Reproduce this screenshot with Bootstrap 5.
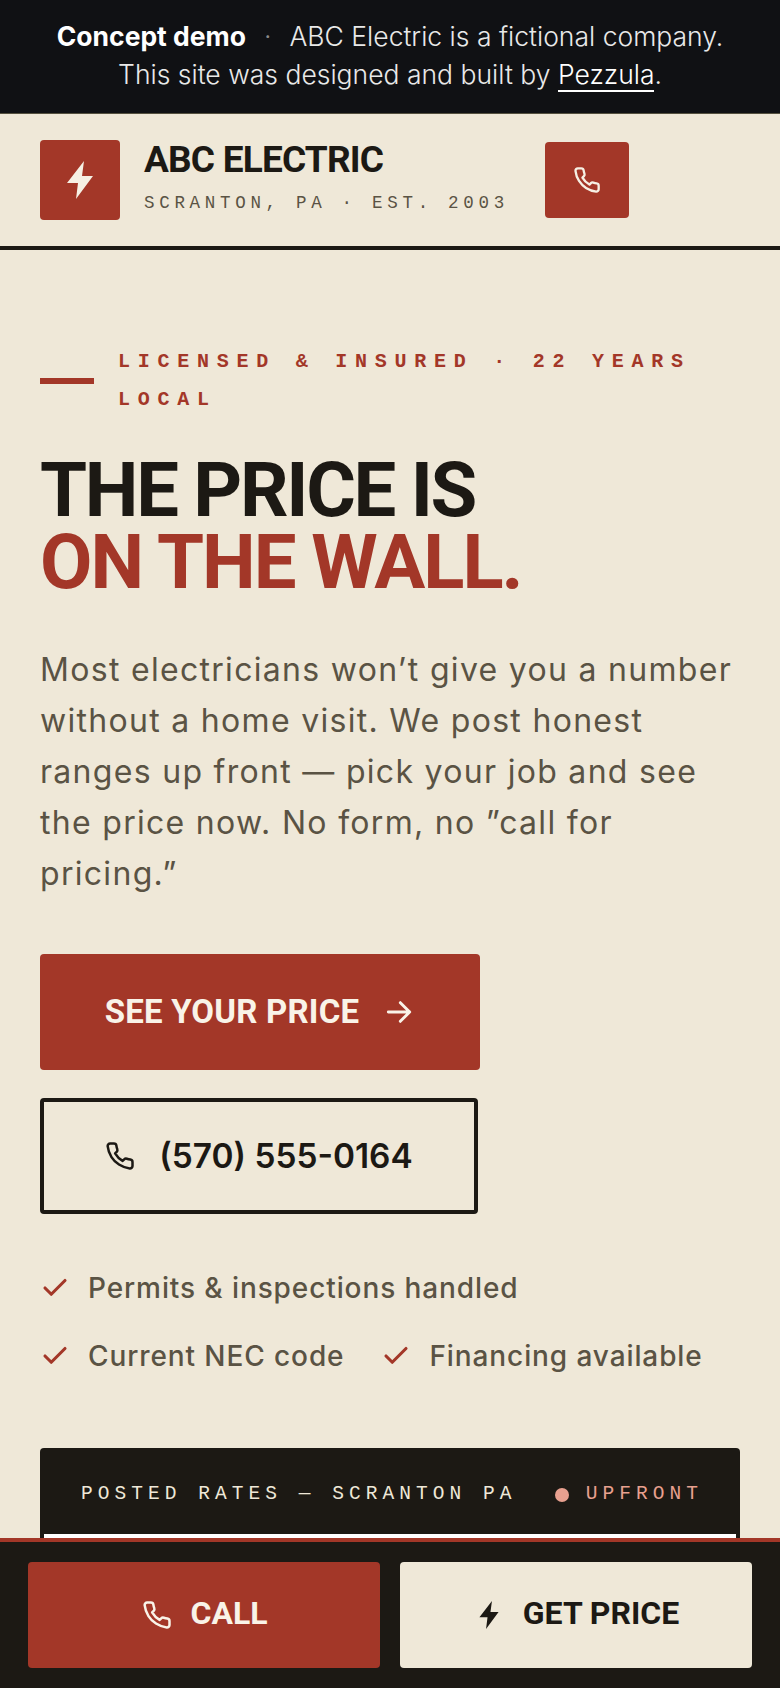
<!DOCTYPE html>
<html lang="en">
<head>
  <meta charset="UTF-8">
  <title>ABC Electric</title>
  <link href="https://cdn.jsdelivr.net/npm/bootstrap@5.3.3/dist/css/bootstrap.min.css" rel="stylesheet">
  <style>
    html, body { height: 1688px; overflow: hidden; }
    body { background: #efe8d8; color: #1c1914; font-family: Inter, sans-serif; }
    svg { flex: none; display: block; }
    .icon-line { fill: none; stroke: currentColor; stroke-width: 2; stroke-linecap: round; stroke-linejoin: round; }

    .demo-bar { background: #101114; color: #e9e9e9; height: 114px; border-bottom: 1px solid #55513f; padding-top: 18px; font-size: 26.5px; line-height: 37.5px; font-weight: 300; }
    .demo-bar strong { color: #fff; font-weight: 700; }
    .demo-dot { color: #8a8a8a; margin: 0 18px; }
    .demo-bar a { color: #fff; text-decoration: none; border-bottom: 2px solid #fff; }

    .site-head { height: 136px; border-bottom: 4px solid #1c1914; padding: 26px 0 0 40px; }
    .logo-box { width: 80px; height: 80px; background: #a33728; color: #f6f0e4; border-radius: 4px; margin-right: 24px; }
    .brand-name { font-family: Roboto, sans-serif; font-weight: 700; font-size: 37px; line-height: 40px; letter-spacing: -.8px; }
    .brand-sub { font-family: "Liberation Mono", monospace; font-size: 17.5px; line-height: 22px; letter-spacing: 4.7px; color: #5a5344; margin-top: 12px; white-space: nowrap; }
    .head-call { width: 84px; height: 76px; background: #a33728; color: #f6f0e4; border-radius: 4px; margin-left: 36px; margin-top: 2px; }

    .hero-wrap { padding: 92px 36px 0 40px; }
    .eyebrow-rule { width: 54px; height: 6px; background: #a33728; flex: none; margin-right: 24px; }
    .eyebrow { font-family: "Liberation Mono", monospace; font-weight: 700; font-size: 20px; line-height: 38px; letter-spacing: 7.75px; color: #a33728; padding-top: 1px; }
    .hero-title { font-family: Roboto, sans-serif; font-weight: 700; font-size: 76px; line-height: 72px; letter-spacing: -2.3px; margin: 35px 0 0 0; }
    .hero-title span { color: #a33728; display: block; letter-spacing: -2px; }
    .hero-copy { font-size: 32px; line-height: 51px; letter-spacing: 1.3px; color: #5a5344; margin: 46px 0 0 0; font-weight: 400; }

    .btn-price { width: 440px; height: 116px; background: #a33728; color: #f9f3e8; border: 0; border-radius: 4px; font-family: Roboto, sans-serif; font-weight: 700; font-size: 33px; letter-spacing: .2px; gap: 24px; margin-top: 55px; }
    .btn-price:hover { background: #a33728; color: #f9f3e8; }
    .btn-price svg { stroke-width: 2.2; }
    .btn-phone { width: 438px; height: 116px; background: transparent; color: #1c1914; border: 4px solid #1c1914; border-radius: 4px; font-family: Inter, sans-serif; font-weight: 600; font-size: 33.4px; gap: 24px; margin-top: 28px; }
    .btn-phone:hover { background: transparent; color: #1c1914; border-color: #1c1914; }

    .perks { margin-top: 40px; font-size: 28px; line-height: 68px; letter-spacing: .9px; font-weight: 500; color: #5a5344; }
    .perk-item { gap: 18px; }
    .perk-item svg { color: #a33728; stroke-width: 2.5; }
    .perk-first { margin-right: 37px; }

    .rates-card { background: #1c1914; border-radius: 4px 4px 0 0; margin-top: 58px; padding: 0 4px; width: 700px; }
    .rates-head { height: 86px; padding: 8px 33px 0 37px; font-family: "Liberation Mono", monospace; font-size: 19.5px; letter-spacing: 5.05px; color: #efe8d8; white-space: nowrap; }
    .rates-tag { color: #e8a08f; }
    .rates-dot { width: 14px; height: 14px; border-radius: 50%; background: #e8a08f; margin-right: 17px; }
    .rates-body { background: #fff; height: 120px; }

    .call-bar { position: fixed; left: 0; right: 0; bottom: 0; height: 150px; background: #1c1914; border-top: 4px solid #a33728; padding: 20px 28px; gap: 20px; }
    .call-bar .btn { width: 352px; height: 106px; border: 0; border-radius: 4px; font-family: Roboto, sans-serif; font-weight: 700; font-size: 32px; gap: 18px; padding: 0 0 4px 2px; }
    .bar-call, .bar-call:hover { background: #a33728; color: #f9f3e8; }
    .call-bar .bar-price, .bar-price:hover { background: #efe8d8; color: #1c1914; gap: 24px; padding-left: 6px; }
    .bar-price svg { margin-top: 4px; }
    .bar-call svg { margin-top: 4px; }
  </style>
</head>
<body>

  <div class="demo-bar text-center">
    <div><strong>Concept demo</strong><span class="demo-dot">·</span>ABC Electric is a fictional company.</div>
    <div>This site was designed and built by <a href="#">Pezzula</a>.</div>
  </div>

  <header class="site-head d-flex">
    <div class="logo-box d-flex align-items-center justify-content-center">
      <svg width="26" height="38" viewBox="0 0 26 38" fill="currentColor"><path d="M17 0 0 22h11L9 38l17-23H15z"/></svg>
    </div>
    <div>
      <div class="brand-name">ABC ELECTRIC</div>
      <div class="brand-sub">SCRANTON, PA · EST. 2003</div>
    </div>
    <a href="#" class="head-call d-flex align-items-center justify-content-center">
      <svg class="icon-line" width="28" height="28" viewBox="0 0 24 24"><path d="M22 16.92v3a2 2 0 0 1-2.18 2 19.79 19.79 0 0 1-8.63-3.07 19.5 19.5 0 0 1-6-6 19.79 19.79 0 0 1-3.07-8.67A2 2 0 0 1 4.11 2h3a2 2 0 0 1 2 1.72 12.84 12.84 0 0 0 .7 2.81 2 2 0 0 1-.45 2.11L8.09 9.91a16 16 0 0 0 6 6l1.27-1.27a2 2 0 0 1 2.11-.45 12.84 12.84 0 0 0 2.81.7A2 2 0 0 1 22 16.92z"/></svg>
    </a>
  </header>

  <main class="hero-wrap">
    <div class="d-flex align-items-center">
      <div class="eyebrow-rule"></div>
      <div class="eyebrow">LICENSED &amp; INSURED · 22 YEARS LOCAL</div>
    </div>

    <h1 class="hero-title">THE PRICE IS <span>ON THE WALL.</span></h1>

    <p class="hero-copy">Most electricians won’t give you a number without a home visit. We post honest ranges up front — pick your job and see the price now. No form, no ”call for pricing.”</p>

    <a href="#" class="btn btn-price d-flex align-items-center justify-content-center">
      SEE YOUR PRICE
      <svg class="icon-line" width="32" height="32" viewBox="0 0 24 24"><path d="M4 12h16M13 5l7 7-7 7"/></svg>
    </a>
    <a href="#" class="btn btn-phone d-flex align-items-center justify-content-center">
      <svg class="icon-line" width="30" height="30" viewBox="0 0 24 24"><path d="M22 16.92v3a2 2 0 0 1-2.18 2 19.79 19.79 0 0 1-8.63-3.07 19.5 19.5 0 0 1-6-6 19.79 19.79 0 0 1-3.07-8.67A2 2 0 0 1 4.11 2h3a2 2 0 0 1 2 1.72 12.84 12.84 0 0 0 .7 2.81 2 2 0 0 1-.45 2.11L8.09 9.91a16 16 0 0 0 6 6l1.27-1.27a2 2 0 0 1 2.11-.45 12.84 12.84 0 0 0 2.81.7A2 2 0 0 1 22 16.92z"/></svg>
      (570) 555-0164
    </a>

    <div class="perks d-flex flex-wrap">
      <div class="perk-item d-flex align-items-center w-100">
        <svg class="icon-line" width="30" height="30" viewBox="0 0 24 24"><path d="M20 6 9 17l-5-5"/></svg>
        Permits &amp; inspections handled
      </div>
      <div class="perk-item perk-first d-flex align-items-center">
        <svg class="icon-line" width="30" height="30" viewBox="0 0 24 24"><path d="M20 6 9 17l-5-5"/></svg>
        Current NEC code
      </div>
      <div class="perk-item d-flex align-items-center">
        <svg class="icon-line" width="30" height="30" viewBox="0 0 24 24"><path d="M20 6 9 17l-5-5"/></svg>
        Financing available
      </div>
    </div>

    <section class="rates-card">
      <div class="rates-head d-flex align-items-center">
        <span>POSTED RATES — SCRANTON PA</span>
        <span class="rates-dot ms-auto"></span>
        <span class="rates-tag">UPFRONT</span>
      </div>
      <div class="rates-body"></div>
    </section>
  </main>

  <nav class="call-bar d-flex">
    <a href="#" class="btn bar-call d-flex align-items-center justify-content-center">
      <svg class="icon-line" width="30" height="30" viewBox="0 0 24 24"><path d="M22 16.92v3a2 2 0 0 1-2.18 2 19.79 19.79 0 0 1-8.63-3.07 19.5 19.5 0 0 1-6-6 19.79 19.79 0 0 1-3.07-8.67A2 2 0 0 1 4.11 2h3a2 2 0 0 1 2 1.72 12.84 12.84 0 0 0 .7 2.81 2 2 0 0 1-.45 2.11L8.09 9.91a16 16 0 0 0 6 6l1.27-1.27a2 2 0 0 1 2.11-.45 12.84 12.84 0 0 0 2.81.7A2 2 0 0 1 22 16.92z"/></svg>
      CALL
    </a>
    <a href="#" class="btn bar-price d-flex align-items-center justify-content-center">
      <svg width="20" height="28" viewBox="0 0 26 38" fill="currentColor"><path d="M17 0 0 22h11L9 38l17-23H15z"/></svg>
      GET PRICE
    </a>
  </nav>

  <script src="https://cdn.jsdelivr.net/npm/bootstrap@5.3.3/dist/js/bootstrap.bundle.min.js"></script>
</body>
</html>
